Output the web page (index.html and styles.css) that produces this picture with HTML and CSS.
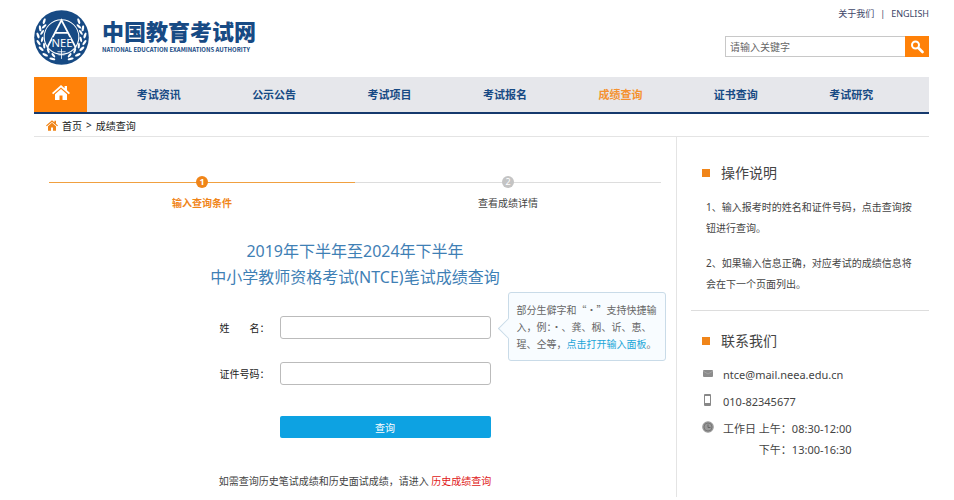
FILE: index.html
```html
<!DOCTYPE html>
<html lang="zh-CN">
<head>
    <meta charset="UTF-8">
    <meta name="viewport" content="width=device-width, initial-scale=1.0">
    <title>成绩查询 - 中国教育考试网</title>
    <link rel="stylesheet" href="styles.css">
</head>
<body>
    <header class="header">
        <a class="logo" href="#">
            <svg class="logo-mark" viewBox="0 0 54 54" aria-hidden="true">
                <defs>
                    <g id="wreath" fill="#fff">
                        <ellipse cx="4" cy="25" rx="1.2" ry="3" transform="rotate(-20 4 25)"/>
                        <ellipse cx="8" cy="22" rx="1.1" ry="2.8" transform="rotate(35 8 22)"/>
                        <ellipse cx="6" cy="18" rx="1.2" ry="3" transform="rotate(-8 6 18)"/>
                        <ellipse cx="10" cy="16" rx="1.1" ry="2.8" transform="rotate(50 10 16)"/>
                        <ellipse cx="10" cy="11" rx="1.2" ry="3" transform="rotate(18 10 11)"/>
                        <ellipse cx="4.5" cy="32" rx="1.2" ry="3" transform="rotate(-35 4.5 32)"/>
                        <ellipse cx="8" cy="29" rx="1.1" ry="2.8" transform="rotate(15 8 29)"/>
                        <ellipse cx="7" cy="38" rx="1.2" ry="3" transform="rotate(-50 7 38)"/>
                        <ellipse cx="10" cy="35" rx="1.1" ry="2.8" transform="rotate(-5 10 35)"/>
                        <ellipse cx="11" cy="44" rx="1.2" ry="3" transform="rotate(-65 11 44)"/>
                        <ellipse cx="14" cy="40" rx="1.1" ry="2.8" transform="rotate(-20 14 40)"/>
                        <ellipse cx="18" cy="48" rx="1.2" ry="3" transform="rotate(-80 18 48)"/>
                        <ellipse cx="19" cy="44.500" rx="1.1" ry="2.6" transform="rotate(-40 19 44.500)"/>
                    </g>
                </defs>
                <circle cx="27" cy="27" r="26.8" fill="#174a84"/>
                <use href="#wreath"/>
                <use href="#wreath" transform="matrix(-1 0 0 1 54 0)"/>
                <circle cx="27" cy="26.500" r="17" fill="#174a84" stroke="#fff" stroke-width="1"/>
                <path d="M13 37 27 10l14 27M20.500 22.500h13" fill="none" stroke="#fff" stroke-width="1.8"/>
                <path d="M23 41h8M24 44h6M27 38v10" fill="none" stroke="#fff" stroke-width=".8"/>
                <rect x="18" y="27" width="18" height="10" fill="#174a84"/>
                <text class="logo-letters" x="27.500" y="36" text-anchor="middle">NEE</text>
            </svg>
            <span class="logo-text">
                <span class="logo-name">中国教育考试网</span>
                <span class="logo-sub">NATIONAL EDUCATION EXAMINATIONS AUTHORITY</span>
            </span>
        </a>
        <div class="header-side">
            <div class="top-links">
                <a href="#">关于我们</a><span>|</span><a href="#">ENGLISH</a>
            </div>
            <form class="search">
                <input class="search-input" type="text" placeholder="请输入关键字" aria-label="请输入关键字">
                <button class="search-btn" type="button" aria-label="搜索">
                    <svg width="14" height="14" viewBox="0 0 14 14" fill="none" stroke="#fff">
                        <circle cx="5.500" cy="5" r="3.500" stroke-width="2"/>
                        <path d="m8.500 8 4 4" stroke-width="2.600" stroke-linecap="round"/>
                    </svg>
                </button>
            </form>
        </div>
    </header>

    <nav class="nav">
        <a class="nav-home" href="#" aria-label="首页">
            <svg width="18" height="16" viewBox="0 0 18 16" fill="#fff">
                <path d="M9 0 0 8l1.200 1.300L9 2.600l7.800 6.700L18 8l-3-2.700V1h-2.400v2.200z"/>
                <path d="M9 4 3 9.200V15h4.500v-4.500h3V15H15V9.200z"/>
            </svg>
        </a>
        <div class="nav-list">
            <a href="#">考试资讯</a>
            <a href="#">公示公告</a>
            <a href="#">考试项目</a>
            <a href="#">考试报名</a>
            <a class="active" href="#">成绩查询</a>
            <a href="#">证书查询</a>
            <a href="#">考试研究</a>
        </div>
    </nav>

    <div class="breadcrumb">
        <svg width="12" height="11" viewBox="0 0 18 16" fill="#f08519" aria-hidden="true">
            <path d="M9 0 0 8l1.200 1.300L9 2.600l7.800 6.700L18 8l-3-2.700V1h-2.400v2.200z"/>
            <path d="M9 4 3 9.200V16h4.500v-5h3v5H15V9.200z"/>
        </svg>
        <a href="#">首页</a><span>&gt;</span><a href="#">成绩查询</a>
    </div>

    <div class="content">
        <main class="main">
            <ol class="steps">
                <li class="step current"><span class="step-num">1</span>输入查询条件</li>
                <li class="step"><span class="step-num">2</span>查看成绩详情</li>
            </ol>

            <h1 class="title">2019年下半年至2024年下半年<br>中小学教师资格考试(NTCE)笔试成绩查询</h1>

            <form class="query-form">
                <div class="form-row">
                    <label for="name">姓　　名：</label>
                    <input type="text" id="name">
                    <div class="tip">部分生僻字和“·”支持快捷输入，例：·、龚、㭎、䜣、恵、瑆、仝等，<a href="#">点击打开输入面板</a>。</div>
                </div>
                <div class="form-row">
                    <label for="idNumber">证件号码：</label>
                    <input type="text" id="idNumber">
                </div>
                <button class="query-btn" type="button">查询</button>
            </form>

            <p class="history">如需查询历史笔试成绩和历史面试成绩，请进入 <a href="#">历史成绩查询</a></p>
        </main>

        <aside class="sidebar">
            <section class="guide">
                <h2>操作说明</h2>
                <p>1、输入报考时的姓名和证件号码，点击查询按钮进行查询。</p>
                <p>2、如果输入信息正确，对应考试的成绩信息将会在下一个页面列出。</p>
            </section>
            <section class="contact">
                <h2>联系我们</h2>
                <div class="contact-row">
                    <svg width="12" height="12" viewBox="0 0 12 12">
                        <rect x="1" y="3" width="10" height="7" rx="1" fill="#8c8c8c"/>
                        <path d="m1 4 5 3 5-3" fill="none" stroke="#aaa" stroke-width=".7"/>
                    </svg>
                    <span>ntce@mail.neea.edu.cn</span>
                </div>
                <div class="contact-row">
                    <svg width="12" height="12" viewBox="0 0 12 12">
                        <rect x="2" y="0" width="7" height="12" rx="1" fill="#888"/>
                        <rect x="3" y="2" width="5" height="7" fill="#fff"/>
                    </svg>
                    <span>010-82345677</span>
                </div>
                <div class="contact-row">
                    <svg width="12" height="12" viewBox="0 0 12 12" fill="none">
                        <circle cx="6" cy="6" r="5.800" fill="#999"/>
                        <circle cx="6" cy="6" r="4" stroke="#777"/>
                        <path d="M6 3.500V6.500h2.500" stroke="#666"/>
                    </svg>
                    <span class="hours">工作日 上午：08:30-12:00<br>下午：13:00-16:30</span>
                </div>
            </section>
        </aside>
    </div>
</body>
</html>
```

FILE: styles.css
```css
* {
    box-sizing: border-box;
}
body {
    margin: 0;
    padding: 0 25px 0 34px;
    font-family: "Noto Sans", "Noto Sans CJK SC", sans-serif;
    font-size: 10px;
    color: #444;
    background-color: #fff;
}
a {
    color: inherit;
    text-decoration: none;
}
h1, h2, p, ol {
    margin: 0;
    padding: 0;
    font-weight: normal;
}
input, button {
    font-family: inherit;
    font-size: 10px;
}

/* header */
.header {
    display: flex;
    justify-content: space-between;
    height: 77px;
}
.logo {
    display: flex;
    gap: 13px;
    padding-top: 10px;
    color: #174a84;
}
.logo-mark {
    width: 55px;
    height: 55px;
}
.logo-letters {
    font-family: "Noto Sans", sans-serif;
    font-size: 11px;
    fill: #fff;
}
.logo-text {
    display: flex;
    flex-direction: column;
    gap: 2px;
    padding-top: 8px;
    font-family: "Noto Sans CJK SC", sans-serif;
}
.logo-name {
    font-size: 22px;
    font-weight: 900;
    line-height: 25px;
}
.logo-sub {
    font-size: 6px;
    font-weight: 700;
    line-height: 9px;
}
.header-side {
    display: flex;
    flex-direction: column;
    align-items: flex-end;
    gap: 16px;
    padding-top: 7px;
}
.top-links {
    display: flex;
    gap: 6px;
    font-size: 9px;
    line-height: 13px;
    color: #3e4668;
}
.search {
    display: flex;
    width: 204px;
    height: 21px;
}
.search-input {
    flex: 1;
    min-width: 0;
    padding: 0 4px;
    border: 1px solid #c8c8c8;
    border-right: none;
    outline: none;
}
.search-input::placeholder {
    color: #666;
}
.search-btn {
    display: flex;
    align-items: center;
    justify-content: center;
    width: 24px;
    padding: 0;
    border: none;
    background-color: #ff8108;
}

/* navigation */
.nav {
    display: flex;
    height: 37px;
    border-bottom: 2px solid #15396d;
    background-color: #e6e7eb;
}
.nav-home {
    display: flex;
    align-items: center;
    justify-content: center;
    width: 53px;
    padding-bottom: 4px;
    background-color: #ff8108;
}
.nav-list {
    display: flex;
    flex: 1;
    padding: 0 20px 0 14px;
}
.nav-list a {
    flex: 1;
    text-align: center;
    font-size: 11px;
    font-weight: bold;
    line-height: 35px;
    color: #174a84;
}
.nav-list .active {
    color: #f5922f;
}
.breadcrumb {
    display: flex;
    align-items: center;
    gap: 4px;
    height: 23px;
    padding-left: 12px;
    border-bottom: 1px solid #e4e4e4;
    color: #222;
}

/* query area */
.content {
    display: flex;
}
.main {
    flex: 1;
    padding: 39px 15px 0;
}
.steps {
    display: flex;
    list-style: none;
}
.step {
    display: flex;
    flex: 1;
    flex-direction: column;
    align-items: center;
    gap: 8px;
    line-height: 15px;
    background: linear-gradient(#ddd, #ddd) 0 6px / 100% 1px no-repeat;
}
.step-num {
    width: 12px;
    height: 12px;
    border-radius: 50%;
    font-size: 9px;
    line-height: 12px;
    text-align: center;
    color: #fff;
    background-color: #c4c4c4;
}
.step.current {
    font-weight: bold;
    color: #f08519;
    background-image: linear-gradient(#f0a040, #f0a040);
}
.step.current .step-num {
    background-color: #f08519;
}
.title {
    margin-top: 27px;
    font-size: 16px;
    line-height: 26px;
    text-align: center;
    color: #3f80b5;
}
.query-form {
    width: 271px;
    margin: 26px auto 0;
}
.form-row {
    display: flex;
    align-items: center;
    position: relative;
    margin-bottom: 23px;
}
.form-row label {
    width: 60px;
    color: #222;
}
.form-row input {
    flex: 1;
    min-width: 0;
    height: 23px;
    padding: 0 6px;
    border: 1px solid #bbb;
    border-radius: 3px;
}
.tip {
    position: absolute;
    top: -24px;
    left: calc(100% + 17px);
    width: 158px;
    padding: 8px;
    border: 1px solid #c9dbe8;
    border-radius: 3px;
    font-family: "Noto Sans CJK SC", sans-serif;
    line-height: 17px;
    color: #666;
    background-color: #f8fcff;
}
.tip::before {
    content: "";
    position: absolute;
    top: 28px;
    left: -8px;
    width: 14px;
    height: 14px;
    border: solid #c9dbe8;
    border-width: 0 0 1px 1px;
    background-color: #f8fcff;
    transform: rotate(45deg);
}
.tip a {
    color: #1ba5d8;
}
.query-btn {
    display: block;
    width: 211px;
    height: 22px;
    margin: 31px 0 0 60px;
    border: none;
    border-radius: 2px;
    color: #fff;
    background-color: #0da2e2;
}
.history {
    margin-top: 36px;
    line-height: 15px;
    text-align: center;
}
.history a {
    color: #e02020;
}

/* sidebar */
.sidebar {
    width: 253px;
    min-height: 360px;
    padding-left: 14px;
    border-left: 1px solid #e4e4e4;
}
.sidebar h2 {
    display: flex;
    align-items: center;
    gap: 11px;
    font-size: 14px;
    line-height: 20px;
}
.sidebar h2::before {
    content: "";
    width: 8px;
    height: 8px;
    background-color: #f08519;
}
.guide {
    padding: 26px 0 15px 11px;
    border-bottom: 1px solid #ddd;
}
.guide p {
    margin: 14px 10px 0 4px;
    line-height: 21px;
}
.contact {
    padding: 20px 0 0 11px;
}
.contact h2 {
    margin-bottom: 13px;
}
.contact-row {
    display: flex;
    gap: 9px;
    margin-bottom: 6px;
    font-size: 11px;
    line-height: 21px;
}
.contact-row svg {
    margin-top: 3px;
}
.hours {
    text-align: right;
}
```
